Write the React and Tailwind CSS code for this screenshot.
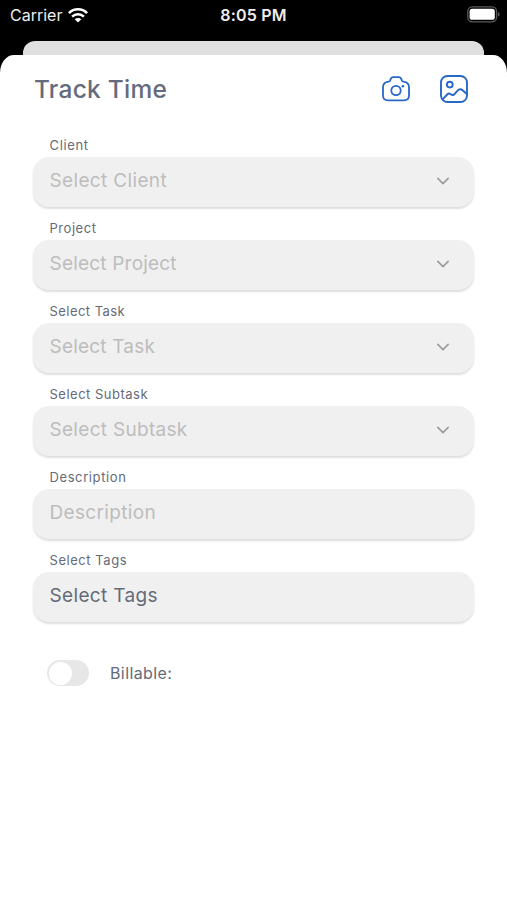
import { ChevronDown } from 'lucide-react';

const fields = [
  { label: 'Client', value: 'Select Client', select: true, labelSpacing: 'tracking-[0.65px]', spacing: 'tracking-[0.35px]' },
  { label: 'Project', value: 'Select Project', select: true, labelSpacing: 'tracking-[0.55px]', spacing: 'tracking-[0.2px]' },
  { label: 'Select Task', value: 'Select Task', select: true, labelSpacing: 'tracking-[0.45px]', spacing: 'tracking-[0.2px]' },
  { label: 'Select Subtask', value: 'Select Subtask', select: true, labelSpacing: 'tracking-[0.5px]', spacing: 'tracking-[0.3px]' },
  { label: 'Description', value: 'Description', labelSpacing: 'tracking-[0.6px]', spacing: 'tracking-[0.35px]' },
  { label: 'Select Tags', value: 'Select Tags', filled: true, labelSpacing: 'tracking-[0.55px]', spacing: 'tracking-[0.35px]' },
];

function WifiIcon() {
  return (
    <svg width="20" height="15" viewBox="0 0 20 15" fill="none" stroke="#fff" strokeWidth="2.5">
      <path d="M0.9 5.1C6 0.1 14 0.1 19.1 5.1" />
      <path d="M4.1 8.6C7.4 5.4 12.6 5.4 15.9 8.6" />
      <path d="M10 14.6L6.7 11.3C8.6 9.5 11.4 9.5 13.3 11.3Z" fill="#fff" stroke="none" />
    </svg>
  );
}

function BatteryIcon() {
  return (
    <svg width="33" height="17" viewBox="0 0 33 17" fill="none">
      <rect x="0.8" y="0.8" width="28.8" height="15" rx="4.5" stroke="#5a5a5a" strokeWidth="1.3" />
      <rect x="2.6" y="2.8" width="25.2" height="11" rx="2.6" fill="#fff" />
      <path d="M31 6v4.6c1-.4 1.600-1.300 1.600-2.300S32 6.400 31 6Z" fill="#5a5a5a" />
    </svg>
  );
}

function CameraIcon() {
  return (
    <svg width="28" height="28" viewBox="0 0 28 28" fill="none" stroke="#2868c8" strokeWidth="1.8" strokeLinejoin="round">
      <path d="M8.2 5.3C8.800 3.300 9.600 2.200 11.200 2.200H16.800C18.400 2.200 19.200 3.300 19.800 5.300C20.100 6 20.700 6.400 21.500 6.600C25.300 7.200 27 9 27 12.200V20.500C27 23.800 25.300 25.300 22 25.300H6C2.700 25.300 1 23.800 1 20.500V12.200C1 9 2.700 7.200 6.500 6.600C7.300 6.400 7.900 6 8.200 5.300Z" />
      <circle cx="14" cy="15.500" r="4.700" />
      <circle cx="20.900" cy="11.200" r="1.200" fill="#2868c8" stroke="none" />
    </svg>
  );
}

function GalleryIcon() {
  return (
    <svg width="28" height="28" viewBox="0 0 28 28" fill="none" stroke="#2868c8" strokeWidth="1.9" strokeLinecap="round" strokeLinejoin="round">
      <rect x="1" y="1" width="26" height="26" rx="6.500" />
      <circle cx="9.800" cy="9.600" r="2.900" />
      <path d="M2.600 24.400L7.200 19.500C8.200 18.400 9.500 18.300 10.700 19.200C12.100 20.300 13.600 20.200 14.700 18.800L17.600 15.600C19.100 13.900 21 13.800 22.600 15.300L26.800 19" />
    </svg>
  );
}

function Field({ label, value, select, filled, labelSpacing, spacing }) {
  return (
    <div>
      <div className={`h-[33px] pl-[16.5px] pt-[12px] text-[13px] leading-[18px] whitespace-nowrap text-[#656b78] ${labelSpacing}`}>
        <span>{label}</span>
      </div>
      <div className="flex h-[50px] items-center justify-between rounded-[16px] bg-[#f0f0f0] pl-[16.5px] pr-[23px] pb-[2px] shadow-[0_2px_2px_rgba(0,0,0,0.13)]">
        <span className={`text-[19px] leading-[28px] whitespace-nowrap ${filled ? 'text-[#656b78]' : 'text-[#bdbdbd]'} ${spacing}`}>
          {value}
        </span>
        {select && <ChevronDown className="h-[20px] w-[16px] scale-[1.3] text-[#9c9c9c]" strokeWidth={1.9} />}
      </div>
    </div>
  );
}

export default function App() {
  return (
    <div className="flex h-[900px] w-[507px] flex-col overflow-hidden bg-black font-['Inter',sans-serif]">
      {/* Status bar */}
      <header className="grid h-[41px] grid-cols-3 items-start pt-[5px] text-[16px] leading-[20px] text-[#eee]">
        <div className="flex items-center gap-[6px] pl-[10px]">
          <span>Carrier</span>
          <WifiIcon />
        </div>
        <span className="text-center font-semibold tracking-[0.2px]">8:05 PM</span>
        <div className="flex justify-end pt-px pr-[7px]">
          <BatteryIcon />
        </div>
      </header>

      {/* Screen behind the sheet */}
      <div className="mx-[23px] h-[30px] shrink-0 rounded-t-[12px] bg-[#e0e0e0]" />

      <main className="relative -mt-[16px] flex-1 rounded-t-[14px_18px] bg-white px-[33px]">
        <div className="flex h-[69px] items-center justify-between pr-[6px] pb-[2px]">
          <h1 className="pl-px text-[24.5px] leading-[32px] font-medium tracking-[0.25px] text-[#656b7c]">Track Time</h1>
          <div className="flex gap-[30px]">
            <CameraIcon />
            <GalleryIcon />
          </div>
        </div>

        {fields.map((field) => (
          <Field key={field.label} {...field} />
        ))}

        {/* Billable toggle */}
        <div className="mt-[38px] flex items-center pl-[14px]">
          <div className="flex h-[26px] w-[42px] items-center rounded-full bg-[#e7e7e7] px-[2px]">
            <div className="h-[23px] w-[23px] rounded-full bg-white" />
          </div>
          <span className="ml-[21px] text-[16px] leading-[24px] tracking-[0.4px] text-[#656b78]">Billable:</span>
        </div>
      </main>
    </div>
  );
}
